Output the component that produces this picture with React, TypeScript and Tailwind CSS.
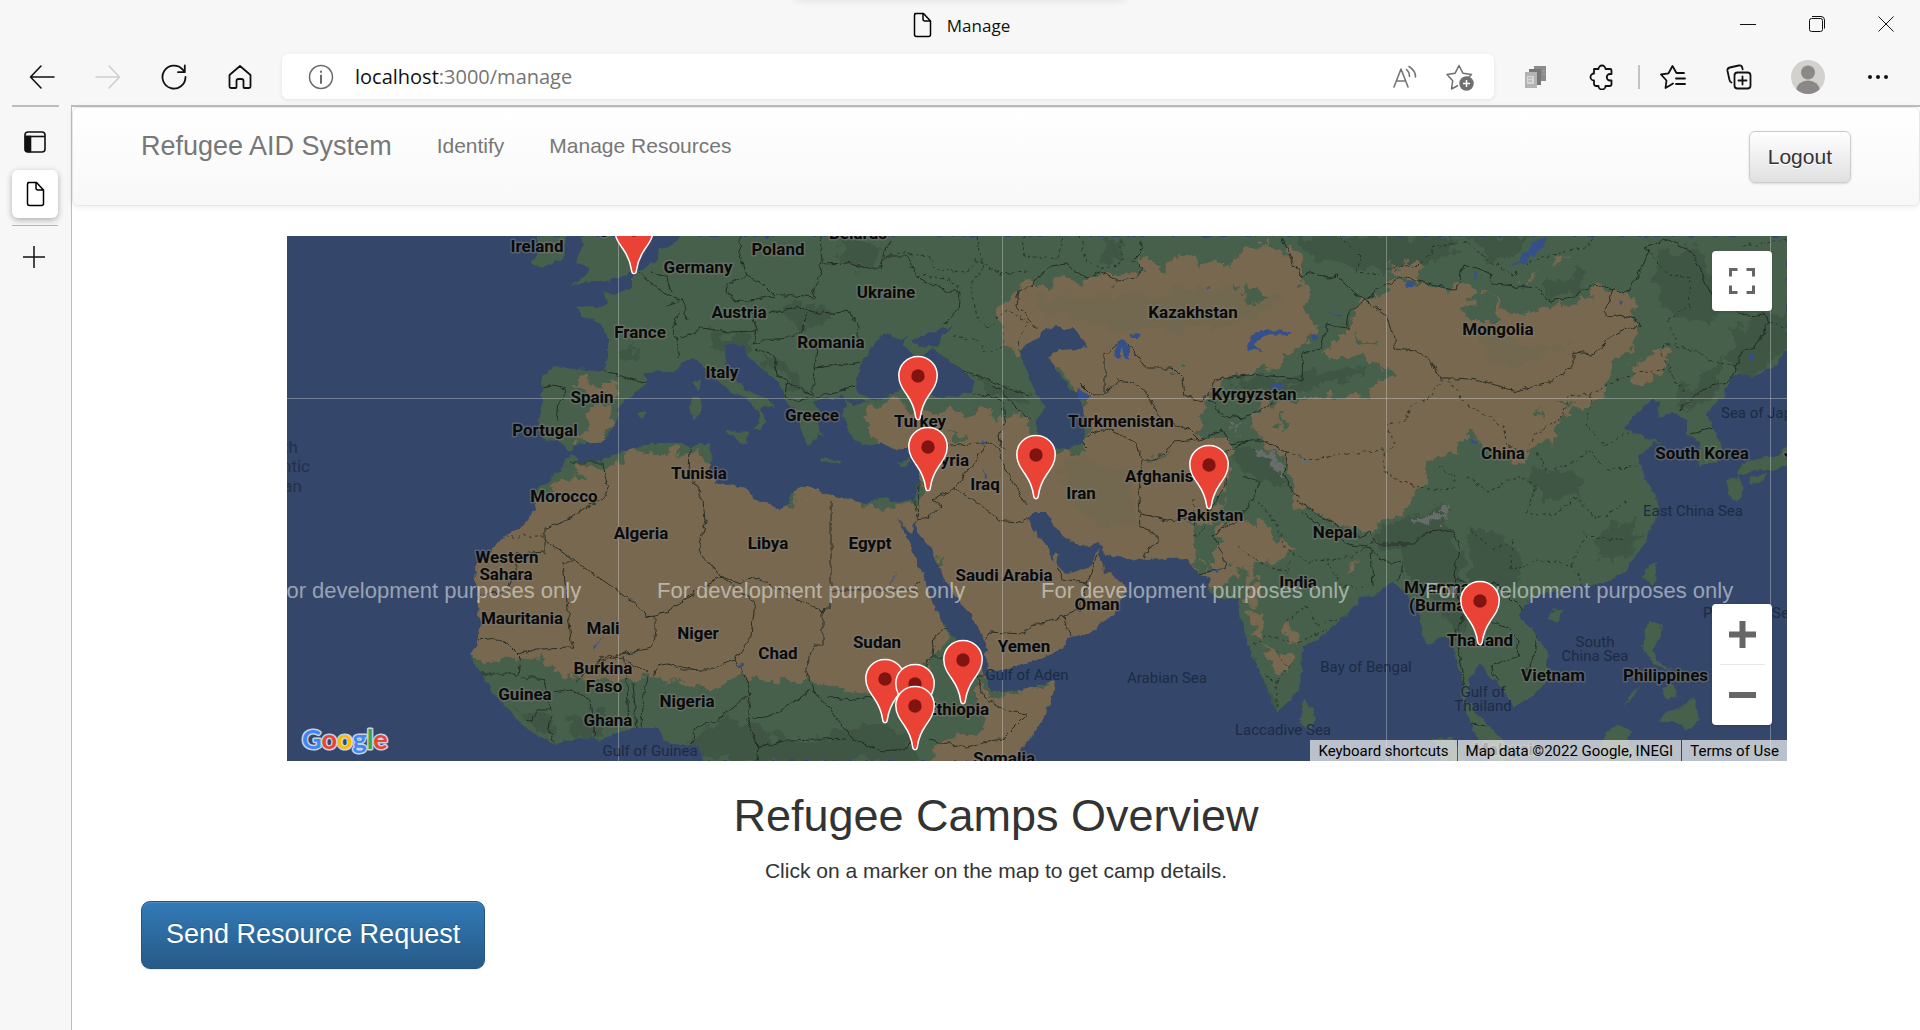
import type { ReactNode } from "react";

const LAND =
  "M393 0 L393 4 L373 14 L369 25 L360 31 L350 37 L346 42 L346 51 L330 57 L321 59 L316 56 L321 69 L310 71 L291 72 L295 80 L305 82 L313 86 L318 97 L321 107 L321 124 L316 136 L300 134 L265 131 L254 139 L256 154 L251 187 L256 204 L273 206 L283 215 L293 207 L313 207 L326 194 L331 174 L341 161 L358 149 L358 137 L380 136 L391 134 L393 127 L406 122 L413 127 L426 141 L440 154 L460 162 L468 171 L473 181 L468 194 L473 194 L479 184 L473 174 L476 169 L488 172 L480 162 L458 154 L446 141 L438 124 L436 109 L446 107 L458 111 L460 119 L473 131 L493 147 L498 164 L510 177 L513 194 L521 209 L530 204 L531 197 L536 201 L528 184 L536 181 L526 164 L540 164 L556 161 L560 167 L556 172 L560 194 L566 204 L583 211 L593 207 L606 214 L623 212 L633 211 L636 227 L631 247 L626 264 L606 266 L595 264 L580 267 L560 264 L536 257 L530 251 L513 251 L503 259 L503 269 L493 274 L470 264 L460 252 L430 247 L420 234 L425 224 L423 207 L403 211 L393 207 L370 207 L346 211 L316 224 L293 226 L283 218 L276 231 L260 246 L246 257 L249 274 L233 294 L218 299 L203 317 L188 331 L190 361 L193 387 L190 407 L184 419 L190 431 L206 457 L220 471 L226 482 L246 497 L268 509 L283 503 L306 502 L313 505 L330 497 L346 492 L370 492 L380 506 L393 509 L413 509 L416 525 L726 525 L753 487 L765 464 L768 446 L740 452 L710 457 L700 447 L701 437 L726 431 L760 421 L776 411 L781 402 L793 399 L806 397 L813 387 L826 379 L833 365 L840 352 L833 344 L818 336 L813 324 L811 314 L818 317 L830 321 L856 324 L900 322 L910 337 L923 342 L920 347 L926 361 L940 364 L951 361 L953 377 L960 407 L973 437 L990 476 L996 472 L1011 454 L1015 434 L1016 411 L1040 397 L1060 377 L1076 361 L1093 357 L1106 344 L1113 351 L1123 361 L1133 381 L1138 404 L1140 409 L1160 401 L1166 411 L1176 444 L1173 457 L1180 475 L1186 494 L1203 525 L1222 525 L1216 504 L1200 487 L1190 477 L1180 464 L1183 441 L1193 427 L1203 441 L1220 457 L1226 472 L1253 454 L1262 441 L1260 417 L1246 394 L1233 381 L1236 371 L1250 359 L1270 354 L1272 365 L1276 352 L1320 347 L1340 334 L1360 304 L1371 277 L1370 261 L1353 234 L1353 221 L1366 207 L1376 207 L1356 201 L1336 191 L1346 182 L1356 171 L1366 164 L1373 167 L1370 182 L1386 177 L1400 184 L1400 197 L1413 207 L1411 231 L1430 227 L1436 211 L1426 194 L1420 177 L1436 161 L1443 144 L1453 136 L1466 142 L1486 131 L1500 114 L1500 0 Z " +
  "M293 0 L297 8 L288 27 L303 32 L296 42 L283 51 L300 46 L320 44 L340 40 L347 31 L343 12 L333 0 Z M250 0 L254 14 L244 27 L253 31 L276 24 L279 0 Z " +
  "M438 196 L461 194 L460 209 Z M403 162 L413 162 L415 170 L411 182 L405 184 Z M406 146 L413 143 L411 156 Z M533 222 L555 225 L552 228 L534 225 Z M610 228 L625 221 L619 230 Z M350 178 L357 175 L361 178 L355 182 Z " +
  "M1016 464 L1026 472 L1030 484 L1023 494 L1014 487 Z M1371 326 L1366 350 L1356 341 L1361 330 Z M1268 373 L1278 374 L1268 387 L1260 381 Z M1361 386 L1375 389 L1373 404 L1366 414 L1370 424 L1390 436 L1366 428 L1355 411 Z M1375 452 L1385 448 L1390 460 L1380 464 Z M1408 460 L1412 484 L1400 496 L1386 484 L1372 487 L1376 476 L1393 473 Z M1353 452 L1346 462 L1335 472 L1348 454 Z M1330 487 L1346 497 L1340 503 L1353 525 L1312 525 L1315 504 Z M1146 502 L1166 502 L1176 525 L1156 525 Z M1500 209 L1492 220 L1470 222 L1453 231 L1450 239 L1473 234 L1488 234 L1500 229 Z M1440 244 L1453 241 L1456 254 L1450 266 L1441 258 Z M1463 241 L1480 236 L1478 244 L1465 248 Z";

const DESERTS = [
  "M246 262 L262 250 L290 240 L297 228 L316 234 L346 214 L366 219 L393 214 L420 226 L440 244 L470 255 L500 276 L510 248 L560 262 L600 272 L640 262 L660 400 L641 427 L626 451 L593 457 L566 456 L526 447 L496 441 L470 446 L453 444 L430 451 L393 450 L360 442 L340 446 L293 444 L276 437 L260 424 L240 417 L206 427 L180 424 L170 330 Z",
  "M690 445 L712 460 L775 440 L760 490 L726 530 L640 530 L650 508 L682 498 L702 478 L690 465 Z",
  "M575 191 L580 174 L606 167 L633 173 L676 178 L703 174 L715 183 L726 177 L746 191 L750 206 L770 217 L800 214 L800 160 L770 134 L758 120 L735 113 L725 122 L716 100 L705 90 L712 75 L730 54 L736 44 L760 57 L776 37 L793 41 L830 44 L856 37 L856 21 L873 31 L893 17 L910 26 L943 27 L956 11 L973 7 L993 12 L1010 21 L1013 37 L1023 61 L1020 81 L1033 91 L1006 111 L993 131 L966 137 L940 144 L920 167 L906 201 L940 207 L936 254 L926 275 L915 330 L905 345 L850 420 L700 445 L640 300 L634 214 L600 212 Z",
  "M928 290 L940 284 L973 286 L990 301 L1006 314 L985 327 L950 330 L948 350 L935 352 L915 345 L925 320 Z",
  "M1033 121 L1060 95 L1070 71 L1083 57 L1120 42 L1153 54 L1173 47 L1186 48 L1203 64 L1230 78 L1256 77 L1286 69 L1310 51 L1326 54 L1350 61 L1340 81 L1353 91 L1343 104 L1346 114 L1330 127 L1320 157 L1300 174 L1280 181 L1270 201 L1253 207 L1233 227 L1213 221 L1196 207 L1173 194 L1173 214 L1140 231 L1140 254 L1120 271 L1093 287 L1076 296 L1040 284 L1010 267 L1006 244 L1000 224 L973 207 L960 181 L980 167 L1026 161 L1080 157 L1113 137 L1066 121 Z",
  "M1340 133 L1362 124 L1368 112 L1388 110 L1380 124 L1372 138 L1345 148 Z",
  "M284 150 L300 145 L330 150 L326 160 L300 156 Z M302 172 L320 172 L328 188 L318 203 L300 204 L278 206 L300 196 Z",
  "M963 372 L972 384 L976 402 L964 398 Z M978 408 L990 414 L1004 422 L1003 436 L988 434 Z M998 396 L1006 388 L1010 404 L1002 408 Z M1060 330 L1074 331 L1064 336 Z M958 330 L966 328 L968 372 L962 366 Z",
  "M1105 34 L1125 26 L1140 28 L1124 40 Z M1262 26 L1275 20 L1272 28 Z M1232 42 L1250 36 L1240 46 Z",
];

const DARK_GREEN = [
  "M1010 0 L1170 0 L1168 20 L1130 30 L1100 34 L1060 28 L1030 22 Z",
  "M1175 0 L1245 0 L1225 26 L1200 20 Z M1260 40 L1300 36 L1290 60 L1262 66 Z",
  "M1370 20 L1410 10 L1432 60 L1424 90 L1390 80 L1370 60 Z M1440 90 L1500 70 L1500 114 L1466 140 L1444 132 Z M1395 150 L1440 120 L1430 160 L1400 176 Z",
  "M1086 300 L1150 270 L1170 300 L1178 340 L1190 380 L1170 400 L1140 360 L1110 320 Z",
  "M1180 290 L1220 300 L1240 330 L1220 360 L1186 350 Z M1240 230 L1290 240 L1296 258 L1250 262 Z M1300 300 L1350 280 L1350 310 L1320 330 Z",
  "M400 505 L440 480 L500 505 L600 490 L625 500 L628 525 L416 525 Z M228 470 L262 480 L270 500 L246 494 Z M280 480 L320 478 L318 500 L286 500 Z",
  "M420 100 L460 96 L470 112 L430 116 Z M490 70 L530 68 L550 86 L520 90 Z M468 118 L500 122 L520 160 L500 150 Z M685 138 L738 158 L745 170 L705 162 Z",
  "M330 112 L345 104 L352 120 L336 126 Z M820 0 L836 0 L830 26 L816 20 Z M550 4 L600 8 L580 34 L552 30 Z M960 420 L975 440 L992 470 L984 470 Z M940 140 L990 144 L1080 130 L1060 146 L960 158 Z",
  "M940 214 L960 208 L992 226 L1000 250 L970 244 Z",
];

const WATER = [
  "M596 96 L613 104 L623 101 L615 109 L623 117 L630 121 L646 113 L656 121 L676 134 L688 147 L683 157 L653 161 L623 151 L606 157 L590 164 L570 157 L568 144 L576 124 L590 104 Z",
  "M626 106 L640 98 L666 89 L653 101 L653 109 L633 111 Z M558 164 L576 163 L582 166 L566 169 Z",
  "M770 91 L782 94 L786 92 L796 102 L800 111 L793 113 L770 114 L761 121 L770 134 L779 148 L783 155 L798 158 L794 166 L797 185 L796 207 L780 213 L766 211 L750 201 L750 183 L758 171 L750 161 L740 137 L733 117 L740 108 L753 101 L758 93 Z",
  "M793 150 L802 160 L799 166 L790 164 Z M830 108 L837 104 L843 112 L843 124 L837 122 L835 110 L832 122 L828 121 Z M843 98 L854 97 L852 101 L842 101 Z",
  "M959 114 L963 101 L973 94 L1006 95 L1002 100 L983 98 L970 105 L968 110 L976 116 Z M984 149 L998 148 L994 152 L986 152 Z M1023 97 L1030 101 L1032 106 L1026 104 Z",
  "M1220 29 L1233 25 L1246 7 L1254 1 L1260 1 L1256 11 L1236 28 Z M1119 46 L1127 44 L1126 52 L1120 50 Z M1188 34 L1190 40 L1187 44 Z M1332 66 L1336 64 L1334 71 Z M1042 76 L1054 80 L1052 82 Z M1183 204 L1190 206 L1188 210 Z M918 52 L923 50 L922 54 Z",
  "M609 280 L616 290 L624 298 L629 283 L630 296 L643 312 L653 336 L670 364 L686 381 L698 404 L701 437 L704 450 L693 431 L670 407 L650 377 L636 341 L620 301 Z",
  "M741 282 L748 277 L760 277 L770 294 L793 311 L813 306 L815 316 L811 313 L803 331 L793 335 L776 336 L770 330 L772 318 L768 316 L766 326 L758 307 L746 294 Z",
  "M695 232 L700 240 L699 244 Z M694 204 L701 206 L694 209 Z M318 398 L308 410 L306 416 Z M925 336 L932 333 L931 338 Z M1463 117 L1468 121 L1462 126 Z M453 426 L456 430 L452 432 Z M610 335 L604 344 L602 352 Z",
];

const BORDERS = [
  "M316 136 L330 139 L344 143 L358 146 M256 152 L266 149 L280 152 L278 160 L272 166 L270 186",
  "M353 37 L370 52 L380 58 L393 64 M365 34 L380 42 L384 56 M393 76 L386 90 L390 104 L392 122 M380 70 L396 64 L400 84 M393 102 L406 98 L414 92 L428 94 L440 96 L470 95",
  "M453 0 L454 20 L460 40 L440 48 L438 54 L448 66 L462 64 L488 60 L478 50 L460 40 M533 0 L535 26 L532 40 L526 58 L528 62 L506 60 L488 58",
  "M536 28 L560 27 L580 32 L594 32 L600 20 L620 20 L628 38 L636 46 L648 48 L660 56 L673 56 L671 74 L660 84 L658 88 M594 34 L598 16 L603 4",
  "M462 70 L470 94 L466 108 L480 104 L500 102 L514 96 L522 76 L512 70 L480 78 L470 84 M522 76 L545 78 L560 74 L572 90 L570 106 M522 76 L530 74 M468 112 L488 120 L490 140 L500 144 L498 160 L510 164 L526 162 L556 154 L568 150 M514 102 L530 110 L528 132 L560 128 L576 126 M530 132 L526 144 L526 160 L508 150 L498 148",
  "M283 226 L316 226 L318 240 L322 254 L315 262 L300 270 L282 283 L258 292 L258 316 L230 318 L230 335 L220 355 L186 360 M258 304 L354 372 L360 381 L378 377 L412 354 L434 341",
  "M276 326 L290 326 M276 326 L284 405 L286 412 L250 413 L240 416 L230 418 L220 408 L210 402 L192 404 M360 381 L368 380 L368 396 L364 412 L346 416 L332 418 L316 422 L306 428",
  "M403 212 L402 236 L416 264 L418 284 L412 314 L434 341 L453 348 L468 341 L536 376 L536 372 M544 264 L544 372 L536 372 L536 410 L526 410 L518 436 L526 450 L527 458",
  "M434 341 L468 366 L464 400 L448 424 L420 434 L393 434 M448 424 L458 440 L464 458 L430 484 L410 490 L404 508 M464 460 L460 484 L472 512 L470 525 M464 482 L490 478 L524 454",
  "M527 456 L540 470 L564 502 L596 515 L620 512 L628 500 M472 512 L500 504 L560 502 M540 462 L570 464 L596 460",
  "M544 354 L630 354 M624 352 L634 346 M660 392 L648 400 L646 420 L640 424 L636 448 M646 420 L670 420 L690 434 M690 440 L696 460 L720 475 L740 478 L716 502 L680 512 L642 504 M690 440 L700 440",
  "M184 438 L232 438 L234 424 L228 418 M234 442 L256 442 L260 456 L264 474 L250 474 L246 484 L240 486 M260 456 L284 454 L304 464 L308 502 M264 480 L262 494 L268 508 M288 448 L306 428 L330 420 L360 436 M336 420 L340 446 L342 490 M360 440 L355 470 L354 492 M346 448 L350 494 M366 440 L370 430 L380 428 L410 434",
  "M632 248 L630 284 L626 264 M640 236 L636 250 M630 284 L642 282 L655 270 L646 264 L668 252 L694 216 L700 206 L664 210 L636 216 M668 252 L716 285 L736 286 L746 279 M700 206 L712 212 L716 228 L728 250 L740 270",
  "M700 402 L702 396 L736 398 L746 390 L776 381 L784 400 M776 381 L793 374 L800 348 L776 344 L770 332 M800 348 L810 318",
  "M686 158 L704 160 L716 166 L718 184 L712 200 L716 212 M704 150 L720 160 L730 172 L744 184 M676 134 L720 152 L742 160",
  "M752 95 L742 84 L730 70 L732 54 L744 50 L752 40 L764 30 L780 28 L793 37 L800 42 L812 36 L830 44 L850 42 L856 32 L846 24 L858 12 L852 4",
  "M793 146 L806 159 L818 159 L818 118 L830 108 L842 110 L860 132 L886 132 L896 142 L898 160 L914 166 M818 159 L830 144 L846 146 L862 160 L874 184 L900 192 L912 204 L936 194 L944 208",
  "M914 166 L930 144 L966 138 L1000 142 L1015 144 L1016 116 L1034 112 L1040 88 L1060 92 L1062 76 L1078 64 M996 4 L1014 42 L1022 35 L1040 42 L1050 40 L1066 56 L1078 64 L1100 48 L1120 41 L1140 48 L1170 54 L1176 28 L1203 36 L1206 48 L1250 52 L1262 66 L1284 62 L1308 48 L1326 54",
  "M1078 64 L1100 80 L1108 102 L1108 113 L1128 115 L1144 124 L1154 142 L1170 142 L1192 144 L1228 155 L1266 145 L1286 130 L1286 116 L1306 118 L1328 98 L1348 90 L1354 92 L1350 84 L1334 78 L1322 80 L1318 74 L1326 54 L1338 58 L1350 42 L1362 16 L1357 12 L1380 4 L1402 12 L1414 34 L1422 56 L1450 74 L1462 80 L1478 78 L1482 86 L1468 112 L1456 114 L1450 130 L1444 144 L1424 150 L1408 160 L1392 175 M1404 198 L1426 192",
  "M800 210 L793 204 L820 192 L850 208 L854 224 L868 224 L888 206 L912 204 M854 224 L852 264 L854 290 L870 300 L870 308 L860 312 L857 324 M854 278 L880 284 L920 280 L938 250 L940 214 L960 206 M926 300 L940 288 M922 162 L936 180 L958 182 L970 176 L986 166 M944 208 L972 204 L1000 216 L998 240 L1010 262 M926 300 L936 318 L938 332 L912 338 M926 300 L950 284 L968 262 L972 246 L956 240",
  "M1010 264 L1040 284 L1074 302 L1084 296 L1088 308 L1126 308 L1140 296 L1166 294 L1172 310 L1168 340 L1188 352 L1210 348 M1014 276 L1060 308 L1084 312 L1086 350 M1084 312 L1094 324 L1116 328 L1112 344",
  "M1170 410 L1178 444 L1174 450 M1168 340 L1176 380 L1168 400 M1210 348 L1232 370 L1250 400 L1246 426 L1236 440 M1190 380 L1220 392 L1232 404 L1230 420 L1204 430 L1212 446 M1183 488 L1200 490",
];

const PROVINCES = [
  "M610 16 L640 20 L650 34 L680 36 L690 24 L715 38 L740 36 M690 0 L696 30 L684 52 L690 80 L700 92 M630 40 L660 42 L672 52 M666 100 L690 104 L700 116 L720 110 M700 92 L720 74 L740 86 L730 110 M738 0 L736 20 L770 22 L776 0",
  "M793 0 L800 26 L815 32 L834 28 L834 0 M1054 0 L1074 20 L1070 36 L1098 40 M1100 32 L1130 30 L1150 10 L1180 6 L1200 24 L1226 40 L1240 26 L1300 10 L1308 0",
  "M1362 16 L1382 38 L1404 42 L1402 70 L1380 84 L1390 106 L1372 112 L1386 140 L1396 156 M1390 110 L1410 116 L1430 128 L1450 130 M1456 10 L1500 4 M1482 86 L1500 92",
  "M1154 142 L1144 162 L1124 170 L1120 184 L1100 190 L1108 208 L1096 218 L1100 240 L1140 254 L1166 252 L1168 240 L1150 230 M1000 216 L1020 224 L1060 218 L1096 214 M1162 144 L1176 166 L1200 180 L1216 190 L1220 210 L1240 216 L1246 200 L1276 180 L1280 160 L1304 158 L1338 140 L1386 132",
  "M1304 158 L1300 190 L1318 210 L1350 190 M1250 216 L1260 236 L1290 224 L1302 214 L1322 234 L1350 230 M1180 240 L1200 256 L1230 240 L1250 250 L1240 276 L1264 280 L1290 262 L1310 284 L1340 266 M1180 290 L1206 314 L1226 304 L1224 334 L1250 324 L1284 328 L1300 300 L1340 304 M1284 328 L1296 346",
  "M970 264 L990 290 L996 310 L1020 326 L1060 322 L1086 306 M950 310 L978 330 L1000 336 L1004 324 M1000 384 L1020 370 L1030 390 L1050 384 M966 408 L980 400 L1010 406 L1040 394 M978 440 L990 444 L1004 430 M990 444 L990 474 M988 414 L1000 430 M1040 326 L1056 350 L1076 352",
  "M906 262 L908 300 L920 290 M218 300 L258 300",
];

type Label = [text: string, x: number, y: number, anchor?: "start" | "end"];

const COUNTRIES: Label[] = [
  ["Kingdom", 322, -2], ["Belarus", 571, 3], ["Ireland", 250, 16], ["Germany", 411, 37], ["Poland", 491, 19], ["Ukraine", 599, 62],
  ["Austria", 452, 82], ["Romania", 544, 112], ["Italy", 435, 142], ["France", 353, 102], ["Spain", 305, 167], ["Portugal", 258, 200],
  ["Greece", 525, 185], ["Turkey", 633, 191], ["Syria", 682, 230, "end"], ["Iraq", 698, 254], ["Iran", 794, 263], ["Tunisia", 412, 243],
  ["Morocco", 277, 266], ["Algeria", 354, 303], ["Libya", 481, 313], ["Egypt", 583, 313], ["Western", 220, 327], ["Sahara", 219, 344],
  ["Mauritania", 235, 388], ["Mali", 316, 398], ["Burkina", 316, 438], ["Faso", 317, 456], ["Guinea", 238, 464], ["Ghana", 321, 490],
  ["Nigeria", 400, 471], ["Niger", 411, 403], ["Chad", 491, 423], ["Sudan", 590, 412], ["Saudi Arabia", 717, 345], ["Yemen", 737, 416],
  ["Oman", 810, 374], ["Ethiopia", 702, 479, "end"], ["Somalia", 717, 528], ["Kazakhstan", 906, 82], ["Kyrgyzstan", 967, 164],
  ["Turkmenistan", 834, 191], ["Afghanistan", 838, 246, "start"], ["Pakistan", 923, 285], ["Nepal", 1048, 302], ["India", 1011, 352],
  ["Myanmar", 1117, 357, "start"], ["(Burma)", 1122, 375, "start"], ["China", 1216, 223], ["Mongolia", 1211, 99], ["South Korea", 1415, 223],
  ["Japan", 1497, 221, "start"], ["Thailand", 1193, 410], ["Vietnam", 1266, 445], ["Philippines", 1336, 445, "start"], ["Malaysia", 1221, 519],
];

const SEAS: Label[] = [
  ["Gulf of Aden", 740, 444], ["Gulf of Guinea", 363, 520], ["Arabian Sea", 880, 447], ["Bay of Bengal", 1079, 436],
  ["Laccadive Sea", 996, 499], ["Gulf of", 1196, 461], ["Thailand", 1196, 475], ["South", 1308, 411], ["China Sea", 1308, 425],
  ["East China Sea", 1406, 280], ["Sea of Japan", 1434, 182, "start"], ["Philippine Sea", 1416, 382, "start"],
];

const OCEAN: Label[] = [["North", 11, 217, "end"], ["Atlantic", 23, 236, "end"], ["Ocean", 15, 256, "end"]];

const CAMPS = [
  { name: "London camp", x: 347, y: 39 },
  { name: "Ankara camp", x: 631, y: 185 },
  { name: "Beirut camp", x: 641, y: 256 },
  { name: "Baghdad camp", x: 749, y: 264 },
  { name: "Kabul camp", x: 922, y: 274 },
  { name: "Axum camp", x: 676, y: 469 },
  { name: "Malakal camp", x: 598, y: 488 },
  { name: "Gambella camp", x: 628, y: 493 },
  { name: "Kakuma camp", x: 628, y: 515 },
  { name: "Bangkok camp", x: 1193, y: 410 },
];

function MapLabels({ labels }: { labels: Label[] }) {
  return (
    <>
      {labels.map(([text, x, y, anchor]) => (
        <text key={text + x} x={x} y={y} textAnchor={anchor ?? "middle"}>
          {text}
        </text>
      ))}
    </>
  );
}

function WorldMap() {
  return (
    <svg viewBox="0 0 1500 525" className="block h-full w-full" role="img" aria-label="Map of refugee camps">
      <defs>
        <clipPath id="land">
          <path d={LAND} />
        </clipPath>
        <filter id="ragged" x="-5%" y="-5%" width="110%" height="110%">
          <feTurbulence type="fractalNoise" baseFrequency="0.06" numOctaves="4" seed="4" />
          <feDisplacementMap in="SourceGraphic" scale="26" xChannelSelector="R" yChannelSelector="G" />
        </filter>
        <filter id="wiggle" x="-5%" y="-5%" width="110%" height="110%">
          <feTurbulence type="fractalNoise" baseFrequency="0.12" numOctaves="2" seed="9" />
          <feDisplacementMap in="SourceGraphic" scale="7" xChannelSelector="R" yChannelSelector="G" />
        </filter>
      </defs>
      <rect width="1500" height="525" fill="#344669" />
      <g filter="url(#wiggle)">
        <g clipPath="url(#land)">
          <rect width="1500" height="525" fill="#46604b" />
          <g filter="url(#ragged)">
            <path d={DARK_GREEN.join(" ")} fill="#3f5745" />
            <path d={DESERTS.join(" ")} fill="#786850" />
            <g fill="#72674f">
              <path d="M740 60 L840 60 L930 50 L1000 60 L960 90 L850 96 L780 84 Z M1190 90 L1250 110 L1290 104 L1240 130 L1200 124 Z M780 220 L840 236 L850 290 L810 290 L770 250 Z" />
            </g>
            <g fill="#46604b">
              <path d="M950 50 L975 54 L984 62 L962 68 Z M1173 74 L1200 60 L1216 84 L1180 84 Z M884 128 L898 132 L888 134 Z M1070 100 L1090 108 L1070 110 Z M1245 170 L1252 176 L1246 180 Z M1270 168 L1290 166 L1280 176 Z M660 194 L682 198 L672 204 Z M866 226 L884 212 L880 222 Z M900 290 L922 286 L926 300 L920 330 L910 330 L914 310 Z M1035 60 L1044 70 L1036 68 Z M990 188 L998 178 L994 196 Z" />
            </g>
            <g fill="#696d69">
              <path d="M944 186 L952 188 L950 200 Z M960 208 L986 218 L1000 236 L996 238 L976 222 Z M1006 214 L1030 228 L1016 224 Z M1010 155 L1024 152 L1016 158 Z M1130 284 L1156 272 L1152 282 L1134 292 Z" />
            </g>
          </g>
          <path d={BORDERS.join(" ")} fill="none" stroke="#1d241f" strokeOpacity="0.85" strokeWidth="1" />
          <path d={PROVINCES.join(" ")} fill="none" stroke="#1d241f" strokeOpacity="0.75" strokeWidth="1" strokeDasharray="3 3" />
        </g>
        <path d={WATER.slice(0, 3).join(" ") + WATER.slice(6, 8).join(" ")} fill="#344669" />
        <path d={WATER.slice(3, 6).join(" ") + WATER[8]} fill="#364f8a" />
        <path d="M583 265 L604 263 L601 270 L596 276 L590 270 Z" fill="#46604b" />
      </g>
      <g stroke="#ffffff" strokeOpacity="0.3">
        <path d="M331.500 0V525M715.500 0V525M1099.500 0V525M1483.500 0V525M0 162.500H1500" />
      </g>
      <g fill="#1c2b45" className="font-['Roboto',sans-serif] text-[15px]">
        <MapLabels labels={SEAS} />
      </g>
      <g fill="#22304b" className="font-['Roboto',sans-serif] text-[17px]">
        <MapLabels labels={OCEAN} />
      </g>
      <g
        fill="#0b0b0b"
        stroke="#7d7d78"
        strokeOpacity="0.5"
        strokeWidth="3"
        strokeLinejoin="round"
        paintOrder="stroke"
        className="font-['Roboto',sans-serif] text-[17px] font-bold"
      >
        <MapLabels labels={COUNTRIES} />
      </g>
      <g fill="#ffffff" fillOpacity="0.5" className="font-['Liberation_Sans',sans-serif] text-[22px]">
        {[-14, 370, 754, 1138].map((x) => (
          <text key={x} x={x} y="362">
            For development purposes only
          </text>
        ))}
      </g>
      <text
        x="15"
        y="513"
        stroke="#c9d2e2"
        strokeWidth="3"
        strokeLinejoin="round"
        paintOrder="stroke"
        className="font-['Lato',sans-serif] text-[27px] font-bold"
      >
        <tspan fill="#4285f4">G</tspan>
        <tspan fill="#ea4335">o</tspan>
        <tspan fill="#fbbc04">o</tspan>
        <tspan fill="#4285f4">g</tspan>
        <tspan fill="#34a853">l</tspan>
        <tspan fill="#ea4335">e</tspan>
      </text>
    </svg>
  );
}

function CampMarker({ name, x, y }: { name: string; x: number; y: number }) {
  return (
    <button
      aria-label={name}
      className="absolute -translate-x-1/2 -translate-y-full"
      style={{ left: `${x / 15}%`, top: `${y / 5.25}%` }}
    >
      <svg width="42" height="66" viewBox="0 0 42 66" className="block">
        <path
          d="M21 1.500C10.200 1.500 1.800 10 1.800 20.500c0 8 4 13.500 8.200 19.500 4.500 6.500 7.500 12.500 8.600 21.500.3 2.300 1 3.200 2.400 3.200s2.100-.9 2.400-3.200c1.100-9 4.100-15 8.600-21.500 4.200-6 8.200-11.500 8.200-19.500C40.200 10 31.800 1.500 21 1.500Z"
          fill="#ea4335"
          stroke="#ffffff"
          strokeWidth="1.500"
        />
        <circle cx="21" cy="21" r="6.700" fill="#811411" />
      </svg>
    </button>
  );
}

function Icon({ size = 26, stroke = 1.6, children }: { size?: number; stroke?: number; children: ReactNode }) {
  return (
    <svg
      width={size}
      height={size}
      viewBox="0 0 26 26"
      fill="none"
      stroke="currentColor"
      strokeWidth={stroke}
      strokeLinecap="round"
      strokeLinejoin="round"
    >
      {children}
    </svg>
  );
}

function ToolButton({ label, className = "", children }: { label: string; className?: string; children: ReactNode }) {
  return (
    <button aria-label={label} className={`flex h-11 w-[66px] shrink-0 items-center justify-center ${className}`}>
      {children}
    </button>
  );
}

const PageIcon = () => (
  <Icon stroke={1.5}>
    <path d="M6 1.500h8.500L21.500 9v13.500a2 2 0 0 1-2 2h-12a2 2 0 0 1-2-2v-19a2 2 0 0 1 2-2M14 1.500V7a2 2 0 0 0 2 2h5.500" />
  </Icon>
);

function TitleBar() {
  return (
    <div className="relative flex h-[50px] items-start justify-end">
      <div className="absolute -top-2 left-1/2 h-2 w-[330px] -translate-x-1/2 rounded-full shadow-[0_0_8px_rgba(0,0,0,0.12)]" />
      <div className="absolute inset-x-0 top-3 flex items-center justify-center gap-3 pr-px">
        <PageIcon />
        <span className="pt-px text-[17px] leading-6 text-[#111]">Manage</span>
      </div>
      <div className="relative flex">
        <button aria-label="Minimize" className="flex h-[47px] w-[69px] items-center justify-center">
          <svg width="16" height="16" stroke="#111" fill="none"><path d="M0 8.500h16" /></svg>
        </button>
        <button aria-label="Restore" className="flex h-[47px] w-[69px] items-center justify-center">
          <svg width="16" height="16" stroke="#111" fill="none">
            <rect x="0.500" y="2.500" width="13" height="13" rx="2" />
            <path d="M3 .5H12a3.500 3.500 0 0 1 3.500 3.500V12.500" />
          </svg>
        </button>
        <button aria-label="Close" className="flex h-[47px] w-[69px] items-center justify-center">
          <svg width="16" height="16" stroke="#111" fill="none"><path d="M.5 .5l15 15M15.500 .5l-15 15" /></svg>
        </button>
      </div>
    </div>
  );
}

function Toolbar() {
  return (
    <div className="flex h-[55px] items-center px-[9px] pb-[2px] text-[#111]">
      <ToolButton label="Back">
        <Icon><path d="M25 13H1.500M12 2 1.500 13 12 24" /></Icon>
      </ToolButton>
      <ToolButton label="Forward" className="text-[#cfcfcf]">
        <Icon><path d="M1 13h23.500M14 2l10.500 11L14 24" /></Icon>
      </ToolButton>
      <ToolButton label="Refresh">
        <Icon stroke={1.8}><path d="M24.500 13A11.500 11.500 0 1 1 21.500 5.300L23.500 8M23.800 1.500V8.200H17" /></Icon>
      </ToolButton>
      <ToolButton label="Home">
        <Icon stroke={1.8}>
          <path d="M13 2 2.500 11v11.500a1.500 1.500 0 0 0 1.500 1.500h4.500a1 1 0 0 0 1-1V17a2 2 0 0 1 2-2h3a2 2 0 0 1 2 2v6a1 1 0 0 0 1 1H22a1.500 1.500 0 0 0 1.500-1.500V11Z" />
        </Icon>
      </ToolButton>
      <div className="ml-[9px] flex h-[45px] min-w-0 flex-1 items-center rounded-md bg-white shadow-[0_1px_4px_rgba(0,0,0,0.08)]">
        <button aria-label="Site information" className="ml-[26px] text-[#6b6b6b]">
          <Icon stroke={1.5}><circle cx="13" cy="13" r="11.500" /><path d="M13 11.500v7.500M13 7.500v.4" strokeWidth="2" /></Icon>
        </button>
        <a href="#manage" className="ml-[21px] flex-1 text-[20px] text-[#757575]">
          <span className="text-[#111]">localhost</span>:3000/manage
        </a>
        <button aria-label="Read aloud" className="mr-7 text-[#757575]">
          <Icon stroke={1.6}><path d="M2 23 9 5l7 18M4.500 17h9M14.500 5.500q3 2.500 3 7M17 2.500q6.500 4 6.500 10.500" /></Icon>
        </button>
        <button aria-label="Add to favorites" className="mr-5 text-[#6f6f6f]">
          <svg width="28" height="28" viewBox="0 0 28 28" fill="none" stroke="currentColor" strokeWidth="1.500" strokeLinejoin="round">
            <path d="M12 22.500 5.500 26l1.200-8.200L1 11.500l8-1.200L13 2.500l4 7.800 8.500 1.200-3 3" />
            <circle cx="20.500" cy="20.500" r="6.500" fill="currentColor" />
            <path d="M20.500 17v7M17 20.500h7" stroke="#fff" />
          </svg>
        </button>
      </div>
      <ToolButton label="Extension" className="ml-[9px]">
        <svg width="24" height="24" viewBox="0 0 24 24">
          <path d="M10 1h12v15H10Z" fill="#8b8b8b" />
          <path d="M5 4h12v16H5Z" fill="#777" />
          <path d="M1 7h12v16H1Z" fill="#b3b3b3" />
          <path d="M3 11h7v8H3Z" fill="#d5d5d5" />
          <path d="M4 13h4M4 16h4M19 6h2M19 9h2" stroke="#aaa" />
        </svg>
      </ToolButton>
      <ToolButton label="Extensions">
        <Icon stroke={1.8}>
          <path d="M5 5h4.500a3.500 3.500 0 0 1 7 0H21a1.500 1.500 0 0 1 1.500 1.500V10h-1.500a3 3 0 0 0 0 6.500h1.500V20a2 2 0 0 1-2 2h-4a3.500 3.500 0 0 1-7 0H7a2 2 0 0 1-2-2v-3.500a3.500 3.500 0 0 1 0-7Z" />
        </Icon>
      </ToolButton>
      <div className="ml-[3px] h-6 w-[2px] bg-[#c4c4c4]" />
      <ToolButton label="Favorites">
        <Icon stroke={1.8}><path d="M8 22.500 5.500 24l1-7.500L1 10.500l7.500-1.200L12.500 2l4 7H24M16 14.500h9M16 20h9M9 22l4-2.500" /></Icon>
      </ToolButton>
      <ToolButton label="Collections">
        <Icon stroke={1.8}>
          <rect x="8.500" y="8.500" width="16" height="16" rx="3" />
          <path d="M16.500 12.500v8M12.500 16.500h8M5.500 18.500A3 3 0 0 1 3.500 16L1.500 7a3 3 0 0 1 2.300-3.500l9-2a3 3 0 0 1 3.500 2.300l.3 1.500" />
        </Icon>
      </ToolButton>
      <ToolButton label="Profile" className="ml-[3px]">
        <svg width="34" height="34" viewBox="0 0 34 34">
          <circle cx="17" cy="17" r="17" fill="#d3d1ce" />
          <circle cx="17" cy="12.500" r="7" fill="#8c8886" />
          <path d="M5.500 29.500a11.500 9 0 0 1 23 0A17 17 0 0 1 5.500 29.500Z" fill="#8c8886" />
        </svg>
      </ToolButton>
      <ToolButton label="Settings and more" className="ml-1">
        <svg width="22" height="6" fill="currentColor"><circle cx="3" cy="3" r="2" /><circle cx="11" cy="3" r="2" /><circle cx="19" cy="3" r="2" /></svg>
      </ToolButton>
    </div>
  );
}

function TabRail() {
  return (
    <aside className="flex w-[71px] shrink-0 flex-col pl-3">
      <div className="h-[2px] w-[47px] bg-[#bdbdbd]" />
      <button aria-label="Tab actions" className="mt-[23px] flex h-6 w-[46px] items-center justify-center">
        <svg width="22" height="22" viewBox="0 0 22 22" fill="none" stroke="#111" strokeWidth="1.600">
          <rect x="1" y="1" width="20" height="20" rx="3" />
          <path d="M1 5.500h20" />
          <path d="M1.500 5.500h5v15h-3a2 2 0 0 1-2-2Z" fill="#111" />
        </svg>
      </button>
      <button aria-label="Manage tab" className="mt-4 flex h-12 w-[46px] items-center justify-center rounded-md bg-white shadow-[0_2px_6px_rgba(0,0,0,0.3)]">
        <PageIcon />
      </button>
      <div className="mt-[7px] h-px w-[46px] bg-[#b5b5b5]" />
      <button aria-label="New tab" className="mt-5 flex h-[22px] w-11 items-center justify-center">
        <svg width="22" height="22" stroke="#111" strokeWidth="1.500"><path d="M0 11h22M11 0v22" /></svg>
      </button>
    </aside>
  );
}

function MapControls() {
  return (
    <>
      <button aria-label="Toggle fullscreen" className="absolute right-[15px] top-[15px] flex size-[60px] items-center justify-center rounded-sm bg-white shadow">
        <svg width="26" height="26" fill="none" stroke="#666" strokeWidth="3"><path d="M1.500 8.500v-7h7M17.500 1.500h7v7M24.500 17.500v7h-7M8.500 24.500h-7v-7" /></svg>
      </button>
      <div className="absolute bottom-9 right-[15px] flex w-[60px] flex-col items-center rounded-sm bg-white shadow">
        <button aria-label="Zoom in" className="flex size-[60px] items-center justify-center">
          <svg width="27" height="27" stroke="#666" strokeWidth="6"><path d="M0 13.500h27M13.500 0v27" /></svg>
        </button>
        <div className="h-px w-[45px] bg-[#e6e6e6]" />
        <button aria-label="Zoom out" className="flex size-[60px] items-center justify-center">
          <svg width="27" height="6" fill="#666"><rect width="27" height="6" /></svg>
        </button>
      </div>
      <div className="absolute bottom-0 right-0 flex h-[21px] gap-px font-['Roboto',sans-serif] text-[15px] leading-[22px] text-black">
        <button className="bg-[#f5f5f5]/70 px-2">Keyboard shortcuts</button>
        <span className="bg-[#f5f5f5]/70 px-2">Map data ©2022 Google, INEGI</span>
        <a href="#terms" className="bg-[#f5f5f5]/70 px-2">Terms of Use</a>
      </div>
    </>
  );
}

export default function App() {
  return (
    <div className="flex min-h-screen flex-col overflow-hidden bg-[#f7f7f7] font-['Open_Sans',sans-serif]">
      <TitleBar />
      <Toolbar />
      <div className="flex flex-1">
        <TabRail />
        <div className="min-w-0 flex-1 border-l border-t-2 border-[#bdbdbd] bg-white font-['Liberation_Sans',sans-serif] text-[21px] leading-[30px] text-[#333]">
          <nav className="flex h-[99px] items-start justify-between rounded-md border border-[#e7e7e7] bg-gradient-to-b from-white to-[#f8f8f8] px-[68px] text-[#777] shadow-[0_1px_7px_rgba(0,0,0,0.08)]">
            <div className="flex items-center gap-[45px] pt-[23px]">
              <a href="#home" className="text-[27px]">Refugee AID System</a>
              <a href="#identify">Identify</a>
              <a href="#resources">Manage Resources</a>
            </div>
            <button className="mt-[23px] rounded-md border border-[#ccc] bg-gradient-to-b from-white to-[#e0e0e0] px-[18px] py-[10px] text-[#333] shadow-sm [text-shadow:0_1px_0_#fff]">
              Logout
            </button>
          </nav>
          <main className="px-[69px] pt-[30px]">
            <div className="relative ml-[146px] mr-[64px] aspect-[20/7] overflow-hidden">
              <WorldMap />
              {CAMPS.map((camp) => (
                <CampMarker key={camp.name} {...camp} />
              ))}
              <MapControls />
            </div>
            <h1 className="mt-[30px] text-center text-[45px] leading-[50px]">Refugee Camps Overview</h1>
            <p className="mt-[15px] text-center">Click on a marker on the map to get camp details.</p>
            <button className="mt-[15px] rounded-[9px] border border-[#245580] bg-gradient-to-b from-[#337ab7] to-[#265a88] px-6 pb-4 pt-[14px] text-[27px] leading-[36px] text-white shadow-[inset_0_1px_0_rgba(255,255,255,0.15),0_1px_1px_rgba(0,0,0,0.08)] [text-shadow:0_-1px_0_rgba(0,0,0,0.2)]">
              Send Resource Request
            </button>
          </main>
        </div>
      </div>
    </div>
  );
}
